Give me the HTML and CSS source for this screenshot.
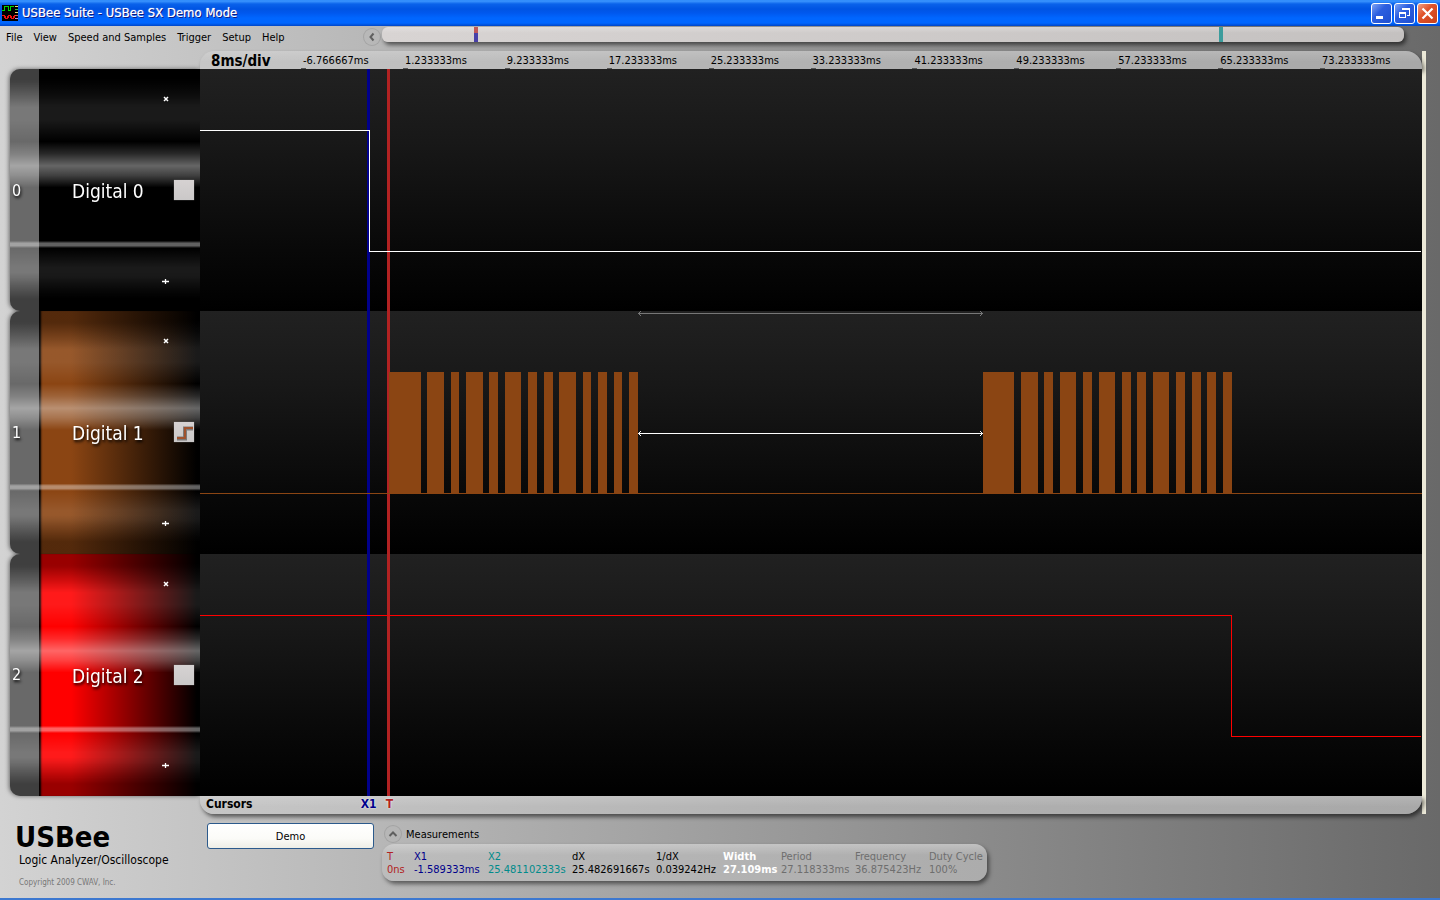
FILE: index.html
```html
<!DOCTYPE html>
<html lang="en">
<head>
<meta charset="utf-8">
<title>USBee Suite - USBee SX Demo Mode</title>
<link rel="stylesheet" href="styles.css">
</head>
<body>
<div class="app">
  <header class="titlebar">
    <svg class="app-icon" width="16" height="16" viewBox="0 0 16 16" aria-hidden="true" shape-rendering="crispEdges">
      <rect width="16" height="16" fill="#000"/>
      <path d="M0 5.500h2v-4h4v4h2v-4h4" fill="none" stroke="#00d800"/>
      <path d="M0 10.500h2l2 3h1l2-3h1l2 3h1l2-3" fill="none" stroke="#f01010" stroke-width="1.500"/>
      <path d="M13 1.500h3M13 7.500h3" stroke="#e8e070"/><path d="M13 4.500h3" stroke="#30c040"/><path d="M13 10.500h3" stroke="#e05050"/><path d="M13 13.500h3" stroke="#d080e0"/>
    </svg>
    <h1 class="window-title">USBee Suite - USBee SX Demo Mode</h1>
    <div class="window-buttons">
      <button class="win-btn" aria-label="Minimize"><svg width="19" height="19" viewBox="0 0 19 19"><path d="M4 13.500h7" stroke="#fff" stroke-width="3"/></svg></button>
      <button class="win-btn" aria-label="Restore"><svg width="19" height="19" viewBox="0 0 19 19" shape-rendering="crispEdges"><path d="M7 6V4.500h7.500V11H12M7 5h8M4 8h7" fill="none" stroke="#fff"/><path d="M4.500 8.500h6v5h-6zM4 9.500h7" fill="none" stroke="#fff"/></svg></button>
      <button class="win-btn win-close" aria-label="Close"><svg width="19" height="19" viewBox="0 0 19 19"><path d="M4.500 4.500l10 10M14.500 4.500l-10 10" stroke="#fff" stroke-width="2.200"/></svg></button>
    </div>
  </header>

  <div class="topbar">
    <nav class="menu">
      <button>File</button><button>View</button><button>Speed and Samples</button><button>Trigger</button><button>Setup</button><button>Help</button>
    </nav>
    <button class="round-btn" aria-label="Collapse overview"><svg width="18" height="18" viewBox="0 0 18 18"><path d="M10.500 5.500L7.500 9l3 3.500" fill="none" stroke="#606060" stroke-width="2"/></svg></button>
    <div class="overview">
      <span class="mark mark-x1" style="left:9%"></span>
      <span class="mark mark-x2" style="left:81.9%"></span>
    </div>
  </div>

  <main class="workspace">
    <aside class="channels">
      <section class="channel ch0">
        <span class="num">0</span>
        <div class="face"><button class="size-btn" aria-label="Shrink"><svg width="6" height="6" viewBox="0 0 6 6"><path d="M1 1l4 4M5 1L1 5" stroke="#fff" stroke-width="1.500"/></svg></button><h2>Digital 0</h2><button class="trig" aria-label="Trigger 0"></button><button class="size-btn" aria-label="Grow"><svg width="7" height="7" viewBox="0 0 7 7"><path d="M0 3.500h7M3.500 1v5" stroke="#fff" stroke-width="1.300"/></svg></button></div>
      </section>
      <section class="channel ch1">
        <span class="num">1</span>
        <div class="face"><button class="size-btn" aria-label="Shrink"><svg width="6" height="6" viewBox="0 0 6 6"><path d="M1 1l4 4M5 1L1 5" stroke="#fff" stroke-width="1.500"/></svg></button><h2>Digital 1</h2><button class="trig" aria-label="Trigger 1"><svg width="20" height="20" viewBox="0 0 20 20"><path class="edge-shadow" d="M3 16.500h8v-10h8"/><path class="edge" d="M3 16h8V6h8"/></svg></button><button class="size-btn" aria-label="Grow"><svg width="7" height="7" viewBox="0 0 7 7"><path d="M0 3.500h7M3.500 1v5" stroke="#fff" stroke-width="1.300"/></svg></button></div>
      </section>
      <section class="channel ch2">
        <span class="num">2</span>
        <div class="face"><button class="size-btn" aria-label="Shrink"><svg width="6" height="6" viewBox="0 0 6 6"><path d="M1 1l4 4M5 1L1 5" stroke="#fff" stroke-width="1.500"/></svg></button><h2>Digital 2</h2><button class="trig" aria-label="Trigger 2"></button><button class="size-btn" aria-label="Grow"><svg width="7" height="7" viewBox="0 0 7 7"><path d="M0 3.500h7M3.500 1v5" stroke="#fff" stroke-width="1.300"/></svg></button></div>
      </section>
    </aside>

    <div class="scope">
      <div class="ruler">
        <strong class="scale">8ms/div</strong>
        <span>-6.766667ms</span><span>1.233333ms</span><span>9.233333ms</span><span>17.233333ms</span><span>25.233333ms</span><span>33.233333ms</span><span>41.233333ms</span><span>49.233333ms</span><span>57.233333ms</span><span>65.233333ms</span><span>73.233333ms</span>
      </div>
      <div class="plot">
        <div class="band"></div><div class="band"></div><div class="band"></div>
        <svg class="waves" viewBox="0 0 1222 727" preserveAspectRatio="none" shape-rendering="crispEdges" role="img" aria-label="Captured waveforms">
          <rect x="167" y="0" width="3" height="727" fill="#00008b"/>
          <rect x="187" y="0" width="3" height="727" fill="#b22222"/>
          <path d="M0 61.500H169.500V182.500H1221" fill="none" stroke="#fff"/>
          <path d="M0 424.500H1222" stroke="#8b4513"/>
          <path fill="#8b4513" d="M189 303h32v122h-32zM227 303h17v122h-17zM251 303h8v122h-8zM266 303h17v122h-17zM289 303h9v122h-9zM305 303h16v122h-16zM328 303h9v122h-9zM344 303h9v122h-9zM359 303h17v122h-17zM383 303h8v122h-8zM398 303h9v122h-9zM414 303h8v122h-8zM429 303h9v122h-9z"/>
          <path fill="#8b4513" d="M783 303h31v122h-31zM821 303h17v122h-17zM844 303h9v122h-9zM860 303h16v122h-16zM883 303h9v122h-9zM899 303h16v122h-16zM922 303h9v122h-9zM937 303h9v122h-9zM953 303h16v122h-16zM976 303h9v122h-9zM992 303h9v122h-9zM1007 303h9v122h-9zM1023 303h9v122h-9z"/>
          <path d="M438 244.500H783M441 242l-2.500 2.500 2.500 2.500M780 242l2.500 2.500-2.500 2.500" fill="none" stroke="#777"/>
          <path d="M438 364.500H783M441 362l-2.500 2.500 2.500 2.500M780 362l2.500 2.500-2.500 2.500" fill="none" stroke="#fff"/>
          <path d="M0 546.500H1031.500V667.500H1221" fill="none" stroke="#f00"/>
        </svg>
      </div>
      <div class="cursors">
        <strong>Cursors</strong>
        <strong class="tag tag-x1" style="left:13.8%">X1</strong>
        <strong class="tag tag-t" style="left:15.5%">T</strong>
      </div>
    </div>
    <div class="edge-strip"></div>
  </main>

  <footer class="footer">
    <div class="brand">
      <p class="logo">USBee</p>
      <p class="tagline">Logic Analyzer/Oscilloscope</p>
      <p class="copyright">Copyright 2009 CWAV, Inc.</p>
    </div>
    <button class="demo">Demo</button>
    <section class="measure">
      <div class="measure-head">
        <button class="round-btn" aria-label="Collapse measurements"><svg width="18" height="18" viewBox="0 0 18 18"><path d="M5.500 11L9 7.500l3.500 3.500" fill="none" stroke="#606060" stroke-width="2"/></svg></button>
        <h3>Measurements</h3>
      </div>
      <table class="measure-table">
        <thead><tr><th class="t w-t">T</th><th class="x1 w-x1">X1</th><th class="x2 w-x2">X2</th><th class="w-x2">dX</th><th class="w-hz">1/dX</th><th class="on w-on">Width</th><th class="off w-x1">Period</th><th class="off w-x1">Frequency</th><th class="off">Duty Cycle</th></tr></thead>
        <tbody><tr><td class="t">0ns</td><td class="x1">-1.589333ms</td><td class="x2">25.481102333s</td><td>25.482691667s</td><td>0.039242Hz</td><td class="on">27.109ms</td><td class="off">27.118333ms</td><td class="off">36.875423Hz</td><td class="off">100%</td></tr></tbody>
      </table>
    </section>
  </footer>
</div>
</body>
</html>
```
FILE: styles.css
```css
* { box-sizing: border-box; }
body {
  margin: 0;
  font-family: "DejaVu Sans Condensed", "DejaVu Sans", sans-serif;
  font-size: 11px;
  line-height: 13px;
  color: #000;
}
h1, h2, h3, p { margin: 0; font-size: inherit; font-weight: normal; }
button { font: inherit; color: inherit; border: 0; padding: 0; background: none; }
svg { display: block; }

.app {
  min-height: 100vh;
  display: flex;
  flex-direction: column;
  background: linear-gradient(90deg, #d3d3d3, #696969);
  border-bottom: 2px solid #3c78d0;
}

/* Title bar */
.titlebar {
  height: 26px;
  padding: 0 2px;
  display: flex;
  align-items: center;
  gap: 4px;
  background: linear-gradient(#2a86f8 0, #3c96ff 1px, #0a62ea 4px, #0054e3 9px, #0058ee 13px, #0066ff 18px, #0066ff 23px, #0046c8 26px);
}
.window-title {
  flex: 1;
  font-size: 13px;
  line-height: 16px;
  color: #fff;
  text-shadow: 1px 1px 0 #0a1883, 0 0 1px #fff;
}
.window-buttons { display: flex; gap: 2px; }
.win-btn {
  width: 21px;
  height: 21px;
  border: 1px solid #fff;
  border-radius: 3px;
  background: linear-gradient(135deg, #7fa4f4, #2c5fe0 40%, #1f4fd0);
}
.win-close { background: linear-gradient(135deg, #f0a084, #e0532a 40%, #c8401a); }

/* Menu and overview */
.topbar { height: 25px; display: flex; padding-right: 36px; }
.menu { width: 363px; padding: 5px 0 0 6px; display: flex; align-items: flex-start; gap: 11px; }
.round-btn { width: 18px; height: 18px; border-radius: 50%; box-shadow: inset 0 0 0 1px rgba(120,120,120,.3); }
.topbar .round-btn { margin: 2px 1px 0 0; }
.overview {
  position: relative;
  flex: 1;
  height: 15px;
  margin-top: 1px;
  border-radius: 6px;
  background: linear-gradient(rgba(255,255,255,.25), transparent 40%), linear-gradient(90deg, #d8d4d3, #c4c1c0);
  box-shadow: 2px 3px 4px rgba(0,0,0,.55);
}
.mark { position: absolute; top: 0; width: 4px; height: 15px; }
.mark-x1 { background: linear-gradient(#c05858 6px, #4840a8 6px); }
.mark-x2 { background: #3c9c9c; }

/* Workspace */
.workspace { flex: 1; display: flex; padding-right: 14px; }
.channels {
  width: 200px;
  padding: 18px 0 18px 10px;
  display: flex;
  flex-direction: column;
  filter: drop-shadow(-1px 0 2px rgba(0,0,0,.5));
}
.channel {
  flex: 1 0 0;
  position: relative;
  display: flex;
  border-radius: 10px 0 0 10px;
  overflow: hidden;
  background: #696969;
  color: #fff;
  text-shadow: 1px 2px 3px #000;
}
.channel::before {
  content: "";
  position: absolute;
  inset: 0;
  z-index: 1;
  pointer-events: none;
  background:
    linear-gradient(rgba(0,0,0,.4) 5%, transparent 16%, transparent 84%, rgba(0,0,0,.4) 95%),
    linear-gradient(transparent 4%, rgba(255,255,255,.1) 15%, rgba(255,255,255,.1) 21%, transparent 30%, rgba(255,255,255,.16) 35%, rgba(255,255,255,.4) 40%, rgba(255,255,255,.25) 44%, transparent 49%, transparent 71%, rgba(255,255,255,.38) 72%, rgba(255,255,255,.38) 73%, transparent 74%, rgba(255,255,255,.1) 82%, rgba(255,255,255,.1) 86%, transparent 95%);
}
.num { width: 29px; padding-left: 2px; font-size: 16px; align-self: center; z-index: 2; }
.face {
  flex: 1;
  display: grid;
  grid-template-columns: 1fr 20px;
  grid-template-rows: 60px 1fr 60px;
  align-items: center;
  padding: 0 6px 0 33px;
  column-gap: 16px;
  box-shadow: inset 3px 0 2px -1px #000;
}
.face > * { z-index: 2; }
.ch0 .face { background: #000; }
.ch1 .face { background: linear-gradient(90deg, #8b4513 20%, #000 98%); }
.ch2 .face { background: linear-gradient(90deg, #f00 20%, #000 98%); }
.face h2 { padding-top: 2px; font-size: 19px; line-height: 24px; white-space: nowrap; -webkit-text-stroke: 0; }
.size-btn { grid-column: 1 / 3; justify-self: end; margin-right: 25px; }
.trig { width: 20px; height: 20px; background: linear-gradient(#d6d2d2, #cac8c8); box-shadow: 0 0 1px #888; }
.edge { fill: none; stroke: #a0522d; stroke-width: 2; }
.edge-shadow { fill: none; stroke: rgba(0,0,0,.4); stroke-width: 4; }

.scope { flex: 1; display: flex; flex-direction: column; }
.ruler, .cursors {
  position: relative;
  height: 18px;
  background: linear-gradient(rgba(255,255,255,.15), transparent 60%), linear-gradient(90deg, #c6c6c6, #b2b2b2 50%, #a8a8a8);
  box-shadow: 2px 3px 4px rgba(0,0,0,.55);
}
.ruler { display: flex; padding-top: 3px; border-radius: 14px 16px 0 0; }
.ruler span { flex: 1 0 0; padding-left: 2px; background: linear-gradient(#555, #555) 0 100% / 5px 1px no-repeat; }
.ruler .scale { width: 101px; padding-left: 11px; font-size: 15px; line-height: 14px; }
.plot { flex: 1; position: relative; z-index: 1; display: flex; flex-direction: column; }
.band { flex: 1; background: linear-gradient(#212121, #181818 30%, #080808 75%, #000); }
.waves { position: absolute; inset: 0; width: 100%; height: 100%; }
.cursors { padding: 2px 6px; font-size: 12px; border-radius: 0 0 16px 14px; }
.tag { position: absolute; top: 2px; transform: translateX(-50%); text-shadow: 0 0 2px #fff; }
.tag-x1 { color: #00008b; }
.tag-t { color: #b22222; }
.edge-strip { width: 4px; background: #ece9d8; }

/* Footer */
.footer { height: 84px; display: flex; align-items: flex-start; }
.brand { width: 207px; padding: 7px 0 0 15px; }
.logo { font-size: 29px; line-height: 32px; font-weight: bold; }
.tagline { padding-left: 4px; font-size: 12px; line-height: 14px; }
.copyright { padding: 10px 0 0 4px; font-size: 8px; line-height: 12px; color: #777; }
.demo {
  width: 167px;
  height: 26px;
  margin: 9px 8px 0 0;
  border: 1px solid #2c5a8c;
  border-radius: 3px;
  background: linear-gradient(#fff, #fbfbf8 60%, #eeeee6);
}
.measure { padding-top: 10px; }
.measure-head { display: flex; align-items: center; gap: 4px; padding-left: 2px; height: 20px; }
.measure-table {
  width: 605px;
  height: 37px;
  table-layout: fixed;
  border-spacing: 0;
  padding: 6px 0 5px 5px;
  border-radius: 12px;
  background: linear-gradient(rgba(255,255,255,.25), transparent 30%), linear-gradient(90deg, #bcbcbc, #acacac);
  box-shadow: 2px 3px 4px rgba(0,0,0,.5);
}
.measure-table th, .measure-table td { padding: 0; text-align: left; font-weight: normal; white-space: nowrap; }
.w-t { width: 27px; }
.w-x1 { width: 74px; }
.w-x2 { width: 84px; }
.w-hz { width: 67px; }
.w-on { width: 58px; }
.measure-table .t { color: #b22222; }
.measure-table .x1 { color: #00008b; }
.measure-table .x2 { color: #008b8b; }
.measure-table .on { color: #fff; font-weight: bold; }
.measure-table .off { color: #6e6e6e; }
```
